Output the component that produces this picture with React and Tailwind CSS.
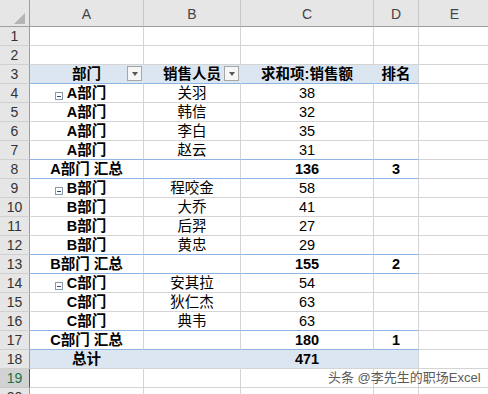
const rows = [
  { n: 1 },
  { n: 2 },
  { n: 3, kind: "head", line: true },
  { n: 4, a: "A部门", b: "关羽", c: "38", toggle: true },
  { n: 5, a: "A部门", b: "韩信", c: "32" },
  { n: 6, a: "A部门", b: "李白", c: "35" },
  { n: 7, a: "A部门", b: "赵云", c: "31", line: true },
  { n: 8, a: "A部门 汇总", c: "136", d: "3", sub: true, line: true },
  { n: 9, a: "B部门", b: "程咬金", c: "58", toggle: true },
  { n: 10, a: "B部门", b: "大乔", c: "41" },
  { n: 11, a: "B部门", b: "后羿", c: "27" },
  { n: 12, a: "B部门", b: "黄忠", c: "29", line: true },
  { n: 13, a: "B部门 汇总", c: "155", d: "2", sub: true, line: true },
  { n: 14, a: "C部门", b: "安其拉", c: "54", toggle: true },
  { n: 15, a: "C部门", b: "狄仁杰", c: "63" },
  { n: 16, a: "C部门", b: "典韦", c: "63", line: true },
  { n: 17, a: "C部门 汇总", c: "180", d: "1", sub: true, line: true },
  { n: 18, a: "总计", c: "471", kind: "total" },
  { n: 19, active: true },
  { n: 20 },
];

const colWidths = ["w-[114px]", "w-[97px]", "w-[133px]", "w-[45px]"];

function Dropdown() {
  return (
    <div className="absolute right-[1px] top-[1px] flex h-[15px] w-[15px] items-center justify-center border border-[#a6a6a6] bg-[#f6f6f6]">
      <div className="h-0 w-0 border-l-[3.5px] border-r-[3.5px] border-t-[4px] border-l-transparent border-r-transparent border-t-[#595959]" />
    </div>
  );
}

function Toggle() {
  return (
    <div className="absolute left-[25px] top-[8px] flex h-[8px] w-[8px] items-center justify-center border border-[#8a97ad] bg-white">
      <div className="h-px w-[4px] bg-[#3b4a66]" />
    </div>
  );
}

function Cell({ row, i, children }) {
  const filled = row.kind === "head" || row.kind === "total";
  const bottom = row.line ? "border-b-[#8db4e2]" : "border-b-[#d4d4d4]";
  const right = filled && i < 3 ? "border-r-[#dce6f1]" : "border-r-[#d4d4d4]";
  const bg = filled ? "bg-[#dce6f1]" : "bg-white";
  return (
    <div
      className={`relative flex h-full shrink-0 items-center justify-center border-b border-r pt-px ${colWidths[i]} ${bottom} ${right} ${bg}`}
    >
      {children}
    </div>
  );
}

function Row({ row }) {
  const bold = row.kind === "head" || row.kind === "total" || row.sub;
  return (
    <div className="flex h-[19px]">
      <div
        className={`flex w-[30px] shrink-0 items-center justify-center border-b border-r text-[14px] ${
          row.active
            ? "border-b-[#c6c6c6] border-r-[#217346] bg-[#d2d2d2] text-[#217346]"
            : "border-b-[#d0d0d0] border-r-[#9e9e9e] bg-[#e6e6e6] text-[#333]"
        }`}
      >
        {row.n}
      </div>
      {row.kind === "head" ? (
        <>
          <Cell row={row} i={0}>
            <span className="font-bold">部门</span>
            <Dropdown />
          </Cell>
          <Cell row={row} i={1}>
            <span className="font-bold">销售人员</span>
            <Dropdown />
          </Cell>
          <Cell row={row} i={2}>
            <span className="font-bold">求和项:销售额</span>
          </Cell>
          <Cell row={row} i={3}>
            <span className="font-bold">排名</span>
          </Cell>
        </>
      ) : (
        <>
          <Cell row={row} i={0}>
            {row.toggle && <Toggle />}
            <span className="whitespace-pre font-bold">{row.a}</span>
          </Cell>
          <Cell row={row} i={1}>
            <span>{row.b}</span>
          </Cell>
          <Cell row={row} i={2}>
            <span className={bold ? "font-bold" : ""}>{row.c}</span>
          </Cell>
          <Cell row={row} i={3}>
            <span className="font-bold">{row.d}</span>
          </Cell>
        </>
      )}
      <div className="h-full w-[72px] shrink-0 border-b border-r border-[#d4d4d4] bg-white" />
    </div>
  );
}

export default function App() {
  return (
    <div className="relative h-[394px] w-[488px] overflow-hidden bg-white font-['Liberation_Sans','Noto_Sans_CJK_SC',sans-serif] text-[14.5px] text-black">
      <div className="flex h-[27px] text-[14px] text-[#444]">
        <div className="relative w-[30px] shrink-0 border-b border-r border-[#9e9e9e] bg-[#e6e6e6]">
          <svg className="absolute left-[14px] top-[13px]" width="11" height="11" viewBox="0 0 11 11">
            <polygon points="11,0 11,11 0,11" fill="#b4b4b4" />
          </svg>
        </div>
        {["A", "B", "C", "D"].map((c, i) => (
          <div
            key={c}
            className={`flex shrink-0 items-center justify-center border-b border-r border-b-[#9e9e9e] border-r-[#c6c6c6] bg-[#e6e6e6] pt-[3px] ${colWidths[i]}`}
          >
            {c}
          </div>
        ))}
        <div className="flex w-[72px] shrink-0 items-center justify-center border-b border-r border-b-[#9e9e9e] border-r-[#c6c6c6] bg-[#e6e6e6] pt-[3px]">
          E
        </div>
      </div>
      {rows.map((row) => (
        <Row key={row.n} row={row} />
      ))}
      <div className="absolute left-[328px] top-[368px] text-[13px] text-[#5a5a5a] [text-shadow:0_0_2px_#fff,0_0_2px_#fff]">
        头条 @李先生的职场Excel
      </div>
    </div>
  );
}
